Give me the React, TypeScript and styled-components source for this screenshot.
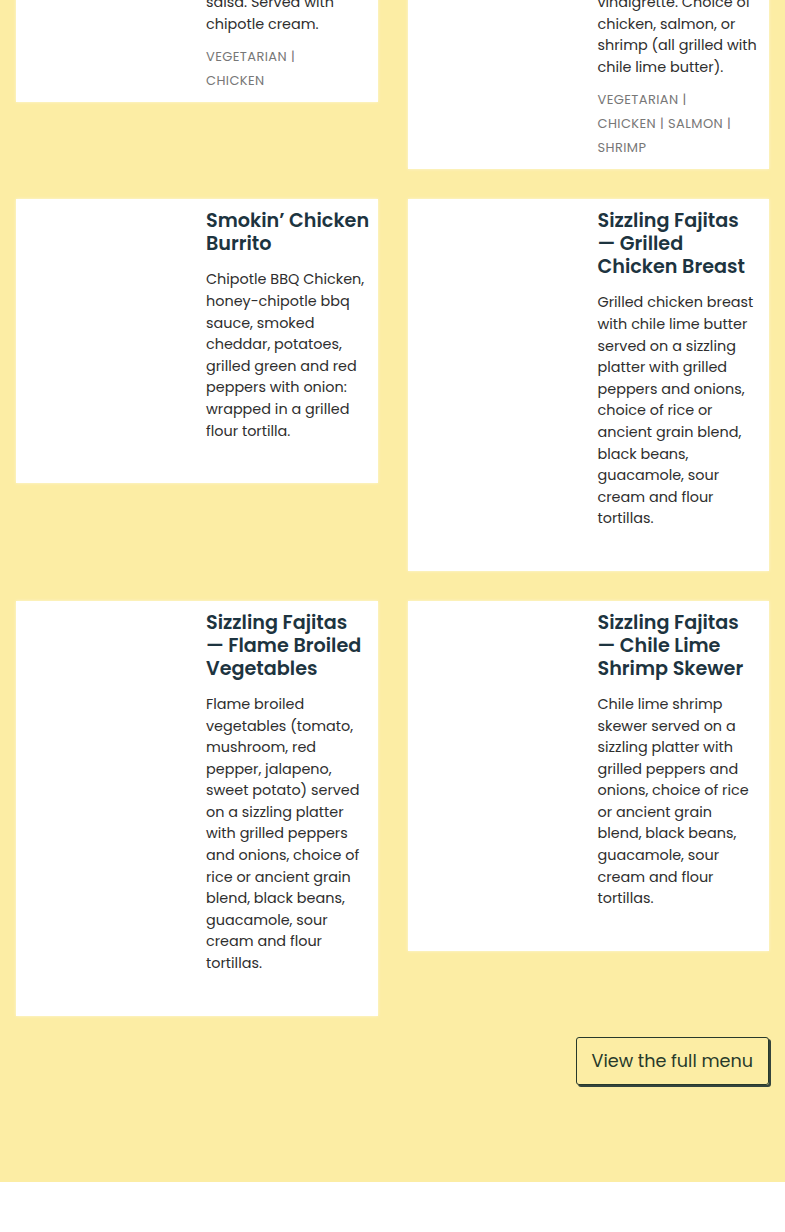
import * as React from 'react';
import styled, { createGlobalStyle } from 'styled-components';

const colors = {
  sand: '#fcedA4',
  white: '#ffffff',
  heading: '#1d3440',
  body: '#2e2e2e',
  tag: '#777777',
  button: '#27392a',
};

const GlobalStyle = createGlobalStyle`
  body {
    margin: 0;
    background: ${colors.white};
    font-family: "Poppins", "Open Sans", "DejaVu Sans", sans-serif;
  }
`;

const MenuSection = styled.section`
  background: ${colors.sand};
  padding: 0 16px 97px;
`;
const CardGrid = styled.div`
  display: grid;
  grid-template-columns: 1fr 1fr;
  column-gap: 30px;
  row-gap: 30px;
  align-items: start;
  margin-top: -18px;
`;
const Card = styled.article`
  display: grid;
  grid-template-columns: 190px 1fr;
  background: ${colors.white};
  box-shadow: 0 0 3px rgba(255, 255, 255, 0.6);
`;
const Photo = styled.div`
  background: ${colors.white};
`;
const CardBody = styled.div`
  padding: 10px 10px 9px 0;
`;
const Title = styled.h3`
  margin: 0 -6px 14px 0;
  font-size: 19.2px;
  line-height: 23px;
  font-weight: 600;
  color: ${colors.heading};
`;
const Description = styled.p`
  margin: 0;
  font-size: 14.4px;
  line-height: 21.6px;
  color: ${colors.body};
`;
const Tags = styled.div`
  margin-top: 10px;
  min-height: 22px;
  max-width: 140px;
  font-size: 13px;
  line-height: 24px;
  font-weight: 400;
  letter-spacing: 0.4px;
  text-transform: uppercase;
  color: ${colors.tag};
`;
const Actions = styled.div`
  display: flex;
  justify-content: flex-end;
  margin-top: 21px;
`;
const MenuButton = styled.a`
  display: inline-flex;
  align-items: center;
  height: 48px;
  box-sizing: border-box;
  padding: 0 15px;
  border: 1px solid ${colors.button};
  border-radius: 3px;
  box-shadow: 2px 2px 0 #34443d;
  font-size: 17.6px;
  color: ${colors.button};
  text-decoration: none;
  cursor: pointer;
`;
const Footer = styled.footer`
  height: 50px;
  background: ${colors.white};
`;

type MenuItem = {
  title?: string;
  description: string;
  tags: string[];
};

const items: MenuItem[] = [
  {
    description: 'salsa. Served with chipotle cream.',
    tags: ['Vegetarian', 'Chicken'],
  },
  {
    description: 'vinaigrette. Choice of chicken, salmon, or shrimp (all grilled with chile lime butter).',
    tags: ['Vegetarian', 'Chicken', 'Salmon', 'Shrimp'],
  },
  {
    title: 'Smokin’ Chicken Burrito',
    description:
      'Chipotle BBQ Chicken, honey-chipotle bbq sauce, smoked cheddar, potatoes, grilled green and red peppers with onion: wrapped in a grilled flour tortilla.',
    tags: [],
  },
  {
    title: 'Sizzling Fajitas —\u00a0Grilled Chicken Breast',
    description:
      'Grilled chicken breast with chile lime butter served on a sizzling platter with grilled peppers and onions, choice of rice or ancient grain blend, black beans, guacamole, sour cream and flour tortillas.',
    tags: [],
  },
  {
    title: 'Sizzling Fajitas —\u00a0Flame Broiled Vegetables',
    description:
      'Flame broiled vegetables (tomato, mushroom, red pepper, jalapeno, sweet potato) served on a sizzling platter with grilled peppers and onions, choice of rice or ancient grain blend, black beans, guacamole, sour cream and flour tortillas.',
    tags: [],
  },
  {
    title: 'Sizzling Fajitas —\u00a0Chile Lime Shrimp Skewer',
    description:
      'Chile lime shrimp skewer served on a sizzling platter with grilled peppers and onions, choice of rice or ancient grain blend, black beans, guacamole, sour cream and flour tortillas.',
    tags: [],
  },
];

function MenuCard(props: { item: MenuItem }) {
  const { item } = props;
  return (
    <Card>
      <Photo />
      <CardBody>
        {item.title && <Title>{item.title}</Title>}
        <Description>{item.description}</Description>
        <Tags>{item.tags.join(' | ')}</Tags>
      </CardBody>
    </Card>
  );
}

export default function App() {
  return (
    <>
      <GlobalStyle />
      <MenuSection>
        <CardGrid>
          {items.map((item, i) => (
            <MenuCard key={i} item={item} />
          ))}
        </CardGrid>
        <Actions>
          <MenuButton>View the full menu</MenuButton>
        </Actions>
      </MenuSection>
      <Footer />
    </>
  );
}
